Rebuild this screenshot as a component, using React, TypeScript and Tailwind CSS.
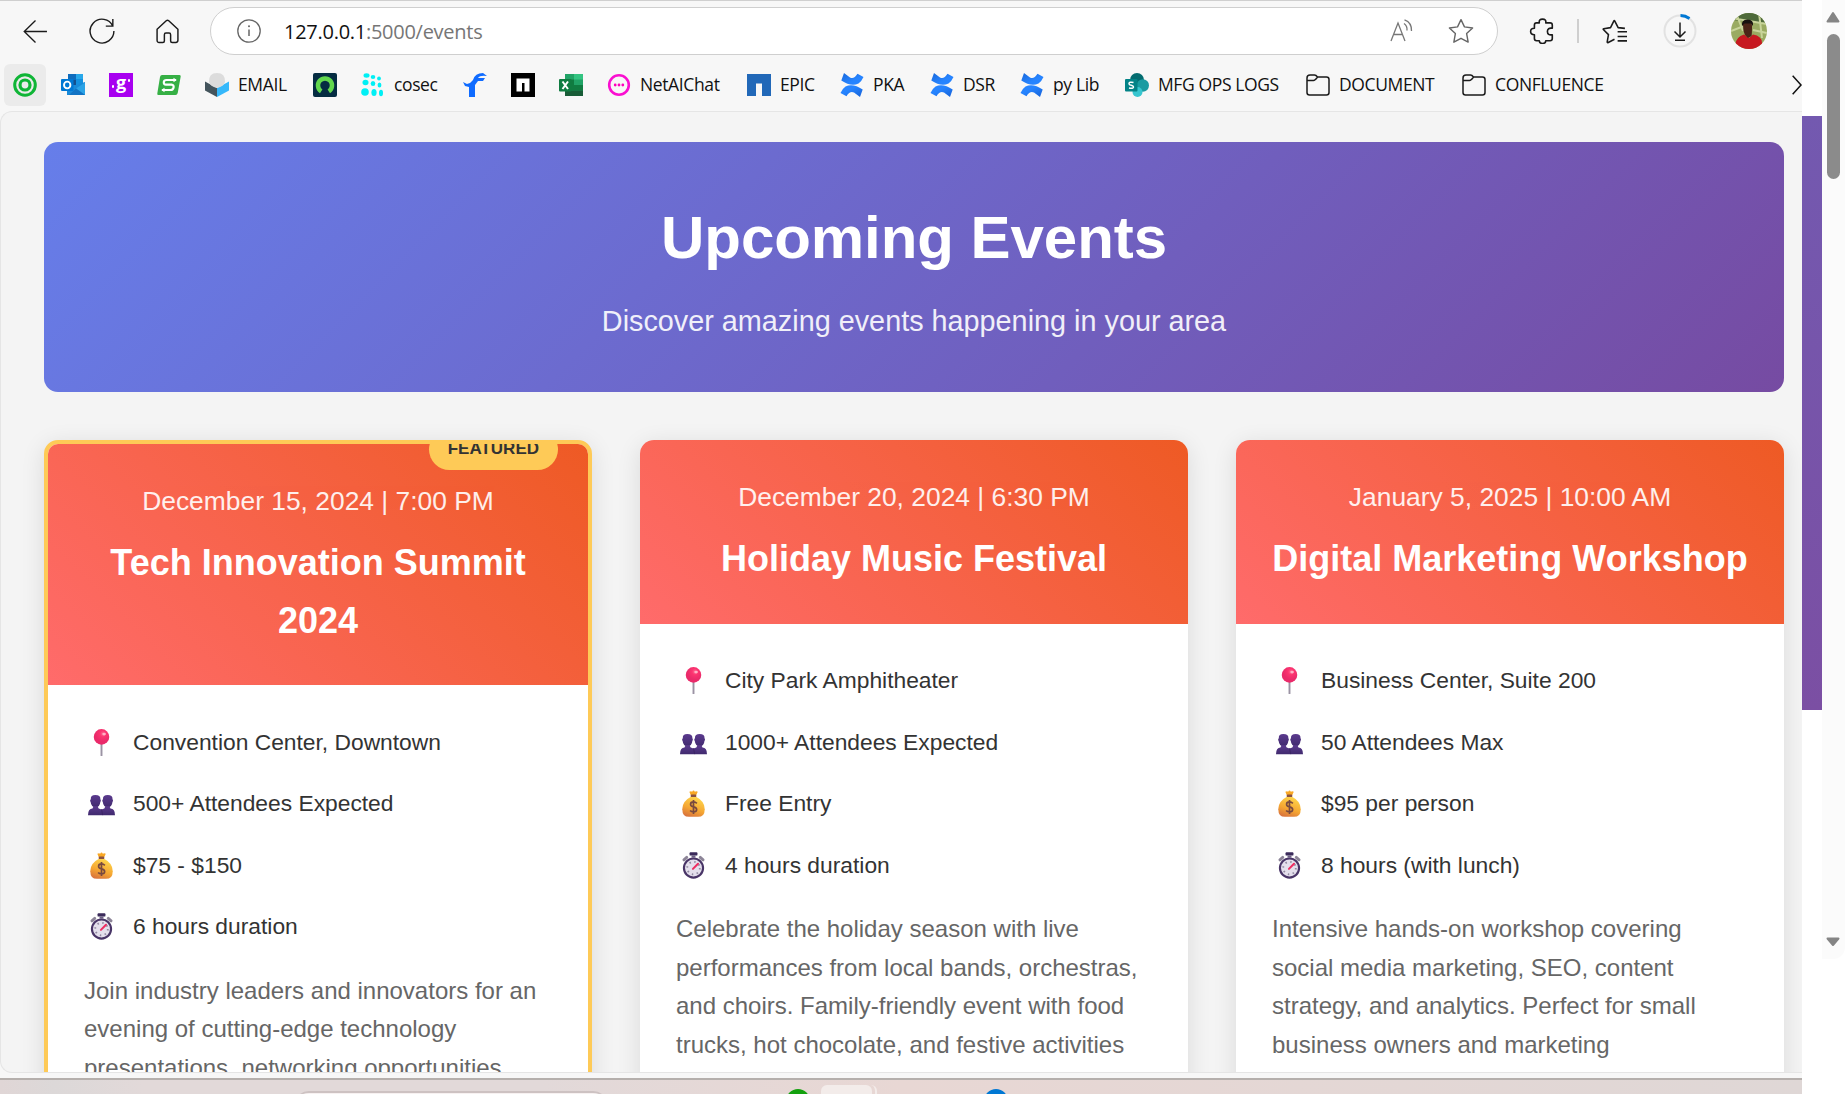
import React from 'react';

const Svg = ({ s = 24, vb = '0 0 24 24', c = '', children }: { s?: number; vb?: string; c?: string; children: React.ReactNode }) => (
  <svg width={s} height={s} viewBox={vb} className={'shrink-0 ' + c} fill="none">{children}</svg>
);

const Confluence = () => (
  <Svg>
    <defs>
      <linearGradient id="cf" x1="0" y1="0" x2="1" y2="1"><stop offset="0" stopColor="#1868db" /><stop offset=".6" stopColor="#2684ff" /></linearGradient>
      <linearGradient id="cg" x1="1" y1="1" x2="0" y2="0"><stop offset="0" stopColor="#1560d6" /><stop offset=".6" stopColor="#2684ff" /></linearGradient>
    </defs>
    <path d="M4 0 L1.300 7.500 Q11 14 18.500 10.500 Q21.500 8.500 23.500 4 L17.500 .8 Q14 6.500 10 4.500Z" fill="url(#cf)" />
    <path d="M20 24 L22.700 16.500 Q13 10 5.500 13.500 Q2.500 15.500 .500 20 L6.500 23.200 Q10 17.500 14 19.500Z" fill="url(#cg)" />
  </Svg>
);

const Folder = () => (
  <Svg><path d="M1 5 Q1 2 4 2 H8.500 Q10 2 11.500 4 H20.500 Q23 4 23 6.500 V19.500 Q23 22 20.500 22 H3.500 Q1 22 1 19.500Z M1 7.500 H7.500 Q9 7.500 11.500 4" stroke="#1b1b1b" strokeWidth="1.500" strokeLinejoin="round" /></Svg>
);

const icons: Record<string, React.ReactNode> = {
  target: <Svg><circle cx="12" cy="12" r="10.300" stroke="#0fb536" strokeWidth="3" /><circle cx="12" cy="12" r="5" stroke="#0fb536" strokeWidth="3.200" /></Svg>,
  outlook: <Svg><path d="M7 1H22V12H7Z" fill="#1490df" /><path d="M7 1H15V7H7Z" fill="#0f6cbd" /><path d="M15 1H22V6H15Z" fill="#28a8ea" /><path d="M7 7H15V12H7Z" fill="#14508f" /><path d="M6 12 H15 L24 9 V22 H6Z" fill="#1a8ad8" /><path d="M15 15.500 L24 9.500 V22Z" fill="#2ba3e6" /><path d="M15 15.500 L24 22 H8Z" fill="#1273c4" /><rect x="0" y="6" width="12.500" height="12" rx="1" fill="#0078d4" /><ellipse cx="6.200" cy="12" rx="3.200" ry="3.400" stroke="#fff" strokeWidth="1.900" /></Svg>,
  g: (
    <span className="flex size-6 items-center justify-center gap-[2px] bg-[#a800f0] leading-none text-white">
      <span className="mt-[3px] size-[2.500px] rounded-full bg-white" />
      <span className="-mt-[7px] font-['Open_Sans'] text-[18px] font-bold leading-none">g</span>
      <span className="-mt-[9px] size-[2.500px] rounded-full bg-white" />
    </span>
  ),
  s: <Svg><path d="M5 2 H22.500 Q24 2 23.700 3.500 L20.700 20 Q20.300 22 18.500 22 H1.500 Q0 22 .300 20.500 L3 4 Q3.400 2 5 2Z" fill="#36b045" /><path d="M19 7 H9.500 Q7 7 6.800 9.200 Q6.600 11.500 9 11.700 H14.500 Q17 12 16.600 14.300 Q16.200 17 13.500 17 H5" stroke="#fff" strokeWidth="2.200" /><path d="M16.500 4.800V9.200L19.800 7ZM7.500 14.800V19.200L4.200 17Z" fill="#fff" /></Svg>,
  email: <Svg><path d="M0 8.500 L12 15 V24 L0 17.500Z" fill="#44545c" /><path d="M12 15 L24 8.500 V17.500 L12 24Z" fill="#35b8fb" /><path d="M4 9 Q3.500 0 12 0 Q20.500 0 20 9 Q19 13.500 12 15 Q5 13.500 4 9Z" fill="#dcdcdc" /></Svg>,
  green: <Svg><rect width="24" height="24" rx="2" fill="#052c42" /><path d="M8.200 18.300 A7 7 0 1 1 15.800 18.300" stroke="#62d84e" strokeWidth="4.500" /></Svg>,
  cosec: <Svg><g fill="#00f0f5"><ellipse cx="5.500" cy="2.500" rx="3" ry="2.200" /><ellipse cx="12" cy="4" rx="2.300" ry="2" /><ellipse cx="18" cy="5.500" rx="1.900" ry="1.900" /><ellipse cx="4.500" cy="9.500" rx="3" ry="2.800" /><ellipse cx="12" cy="10.500" rx="2.300" ry="2.500" /><ellipse cx="18.500" cy="12" rx="1.900" ry="2.500" /><circle cx="4" cy="19" r="3.800" /><ellipse cx="13" cy="19.500" rx="2.600" ry="3.500" /><ellipse cx="20" cy="20" rx="2" ry="3.300" /></g></Svg>,
  f: <Svg><path d="M0 9 L4 11 Q8 10 10 7 Q12 0 20 0 L24 3 Q17 2 15 5 L22 5 L20 8 H15 L12 12 V24 H6 V14 L2 13Z" fill="#0f6bff" /></Svg>,
  n: <Svg><path d="M0 0H24V24H0Z" fill="#000" /><path d="M5.500 5.500H18.500V18.500H13.500V10H11V18.500H5.500Z" fill="#fff" /></Svg>,
  excel: <Svg><path d="M6 1H24V23H6Z" fill="#21a366" /><path d="M15 1H24V6.500H15Z" fill="#33c481" /><path d="M6 6.500H15V12H6Z" fill="#107c41" /><path d="M6 12H24V17.500H6Z" fill="#107c41" /><path d="M6 17.500H24V23H6Z" fill="#185c37" /><rect y="6" width="12.500" height="12.500" rx="1" fill="#107c41" /><path d="M3.500 8.500 L9 16 M9 8.500 L3.500 16" stroke="#fff" strokeWidth="2" /></Svg>,
  chat: <Svg><circle cx="12" cy="12" r="9.800" stroke="#fa0fd0" strokeWidth="2.600" /><g fill="#f0b"><circle cx="8.200" cy="12" r="1.400" /><circle cx="12" cy="12" r="1.400" /><circle cx="15.800" cy="12" r="1.400" /></g></Svg>,
  epic: <Svg><path d="M0 1H24V23H15V10.500H9V23H0Z" fill="#2168b8" /></Svg>,
  conf: <Confluence />,
  share: <Svg><circle cx="12" cy="7" r="7" fill="#036c70" /><circle cx="17.800" cy="12.500" r="6.200" fill="#1a9ba1" /><circle cx="12.500" cy="19" r="5" fill="#37c6d0" /><rect y="6" width="12.500" height="12.500" rx="1" fill="#038387" /><path d="M8.500 9.500 Q4 8.500 4 10.700 Q4 12 6.200 12.300 Q8.500 13 8.500 14 Q8.300 16 4 15" stroke="#fff" strokeWidth="1.500" /></Svg>,
  folder: <Folder />,
};

const bookmarks: { i: string; t?: string; w: string }[] = [
  { i: 'target', w: 'w-[48px]' }, { i: 'outlook', w: 'w-[48px]' }, { i: 'g', w: 'w-[48px]' }, { i: 's', w: 'w-[48px]' },
  { i: 'email', t: 'EMAIL', w: 'w-[108px]' }, { i: 'green', w: 'w-[48px]' }, { i: 'cosec', t: 'cosec', w: 'w-[102px]' },
  { i: 'f', w: 'w-[48px]' }, { i: 'n', w: 'w-[48px]' }, { i: 'excel', w: 'w-[48px]' }, { i: 'chat', t: 'NetAIChat', w: 'w-[140px]' },
  { i: 'epic', t: 'EPIC', w: 'w-[93px]' }, { i: 'conf', t: 'PKA', w: 'w-[90px]' }, { i: 'conf', t: 'DSR', w: 'w-[90px]' },
  { i: 'conf', t: 'py Lib', w: 'w-[105px]' }, { i: 'share', t: 'MFG OPS LOGS', w: 'w-[181px]' },
  { i: 'folder', t: 'DOCUMENT', w: 'w-[156px]' }, { i: 'folder', t: 'CONFLUENCE', w: 'w-[170px]' },
];

const Pin = () => (
  <Svg s={27}><defs><radialGradient id="pin" cx=".6" cy=".3"><stop offset="0" stopColor="#ff6a94" /><stop offset=".4" stopColor="#fb3470" /><stop offset="1" stopColor="#ea2a6a" /></radialGradient></defs>
    <path d="M12 12V23.500" stroke="#9b93a4" strokeWidth="1.700" strokeLinecap="round" /><circle cx="12" cy="7" r="6.900" fill="url(#pin)" /><ellipse cx="14.300" cy="4.500" rx="1.600" ry="1.200" fill="#ffb0c5" /></Svg>
);
const People = () => (
  <Svg s={27} c="translate-y-[1px]"><defs><linearGradient id="ppl" x1="0" y1="0" x2="0" y2="1"><stop offset="0" stopColor="#5b3a8e" /><stop offset="1" stopColor="#402a6e" /></linearGradient></defs>
    <g fill="url(#ppl)"><path d="M2.500 7 Q2.200 3.500 6.500 3.500 Q11.200 3.500 11 7 Q12 8.500 10.900 10 Q10.500 14.500 6.700 14.700 Q2.900 14.500 2.400 10 Q1.200 8.500 2.500 7Z" /><path d="M13.300 7 Q13.100 3.500 17.500 3.500 Q22 3.500 21.800 7 Q22.800 8.500 21.700 10 Q21.300 14.500 17.500 14.700 Q13.700 14.500 13.200 10 Q12 8.500 13.300 7Z" /><path d="M0 21.500 Q0 15.500 4 15.500 L5 13.500 H8.500 L9.500 15.500 L12 16.500 L14.500 15.500 L15.500 13.500 H19 L20 15.500 Q24 15.500 24 21.500Z" /></g><path d="M12 16 L13 21.500" stroke="#35205c" strokeWidth=".6" /></Svg>
);
const Bag = () => (
  <Svg s={27}><defs><linearGradient id="bag" x1=".7" y1="0" x2=".3" y2="1"><stop offset="0" stopColor="#ffd84d" /><stop offset=".6" stopColor="#f5a632" /><stop offset="1" stopColor="#d9743d" /></linearGradient></defs>
    <path d="M9.500 4.500 L8.300 1.500 Q10 .5 10.800 1.500 Q12 -.8 13.200 1.500 Q14.500 .5 15.800 1.500 L14.500 4.500Z" fill="#f9a825" /><path d="M9.700 6 Q2 10 2 17 Q2 23.800 8 23.800 H16 Q22 23.800 22 17 Q22 10 14.300 6Z" fill="url(#bag)" /><rect x="9.500" y="4" width="5" height="2.300" rx=".8" fill="#8a5140" /><path d="M15 11.800 Q13.500 10.500 12 10.600 Q9.400 10.700 9.400 12.700 Q9.400 14.600 12 15 Q14.800 15.500 14.800 17.500 Q14.700 19.500 12 19.500 Q10 19.500 9 18.200 M12 8.800V21.300" stroke="#78493f" strokeWidth="1.500" /></Svg>
);
const Watch = () => (
  <Svg s={27}><path d="M3.500 7 L6 4.800 M20.500 7 L18 4.800" stroke="#8c8497" strokeWidth="2.600" strokeLinecap="round" /><rect x="8.500" y=".2" width="7" height="3" rx=".8" fill="#3b2b5b" /><path d="M12 3V5" stroke="#6e6285" strokeWidth="3.500" /><circle cx="12" cy="14.300" r="8.500" fill="#e4dfec" stroke="#493567" strokeWidth="1.900" /><circle cx="12" cy="14.300" r="5.600" stroke="#9189a0" strokeWidth="1.600" strokeDasharray="1.300 3.098" /><path d="M11.500 15 L16 10.500" stroke="#ee2d61" strokeWidth="1.800" strokeLinecap="round" /></Svg>
);
const detailIcons = [Pin, People, Bag, Watch];

type Event = { date: string; title: string; details: string[]; lines: string[]; featured?: boolean };
const events: Event[] = [
  { featured: true, date: 'December 15, 2024 | 7:00 PM', title: 'Tech Innovation Summit 2024', details: ['Convention Center, Downtown', '500+ Attendees Expected', '$75 - $150', '6 hours duration'], lines: ['Join industry leaders and innovators for an', 'evening of cutting-edge technology', 'presentations, networking opportunities,'] },
  { date: 'December 20, 2024 | 6:30 PM', title: 'Holiday Music Festival', details: ['City Park Amphitheater', '1000+ Attendees Expected', 'Free Entry', '4 hours duration'], lines: ['Celebrate the holiday season with live', 'performances from local bands, orchestras,', 'and choirs. Family-friendly event with food', 'trucks, hot chocolate, and festive activities'] },
  { date: 'January 5, 2025 | 10:00 AM', title: 'Digital Marketing Workshop', details: ['Business Center, Suite 200', '50 Attendees Max', '$95 per person', '8 hours (with lunch)'], lines: ['Intensive hands-on workshop covering', 'social media marketing, SEO, content', 'strategy, and analytics. Perfect for small', 'business owners and marketing'] },
];

function Card({ e }: { e: Event }) {
  return (
    <article className={'relative h-[760px] w-[548px] shrink-0 overflow-hidden rounded-[14px] bg-white shadow-[0_5px_24px_rgba(0,0,0,0.11)] ' + (e.featured ? 'border-4 border-[#feca57]' : '')}>
      {e.featured && <span className="absolute right-[30px] top-[-15px] rounded-[24px] bg-[#feca57] px-[19px] pb-[7px] pt-[6px] text-[17px] font-bold leading-[28px] text-[#333]">FEATURED</span>}
      <header className="bg-[linear-gradient(45deg,#ff6b6b,#ee5a24)] p-9 text-center text-white">
        <p className="mb-3 text-[26.4px] leading-[42.24px] opacity-90">{e.date}</p>
        <h2 className="text-[36px] font-bold leading-[57.6px]">{e.title}</h2>
      </header>
      <div className="p-9">
        <ul className="mb-6 flex flex-col gap-[19.2px]">
          {e.details.map((d, n) => {
            const Icon = detailIcons[n];
            return (
              <li key={d} className="flex h-[42.24px] items-center text-[22.8px] text-[#333]">
                <span className="mr-[14px] flex w-[35px] justify-center"><Icon /></span><span className="-mt-px">{d}</span>
              </li>
            );
          })}
        </ul>
        <p className="whitespace-nowrap text-[24px] leading-[38.4px] text-[#666]">{e.lines.map(l => <span key={l} className="block">{l}</span>)}</p>
      </div>
    </article>
  );
}

function Toolbar() {
  return (
    <div className="flex h-[61px] items-center border-t border-[#cfcfcf] text-[#1b1b1b]">
      <Svg c="ml-[24px]" s={25}><path d="M23 12H1.500M12 1.500L1.200 12L12 22.500" stroke="currentColor" strokeWidth="1.300" /></Svg>
      <Svg c="ml-[41px]" s={26}><path d="M22 7.500 A11 11 0 1 0 23 12 M22 1V7.500H15.500" stroke="currentColor" strokeWidth="1.300" /></Svg>
      <Svg c="ml-[40px]" s={25}><path d="M2 9.800 L10.800 1.700 Q12 .700 13.200 1.700 L22 9.800 V20.500 Q22 22.500 20 22.500 H16.500 Q15 22.500 15 21 V15 Q15 13.500 13.500 13.500 H10.500 Q9 13.500 9 15 V21 Q9 22.500 7.500 22.500 H4 Q2 22.500 2 20.500Z" stroke="currentColor" strokeWidth="1.400" strokeLinejoin="round" /></Svg>
      <div className="ml-[30px] flex h-[48px] w-[1288px] items-center rounded-full border border-[#cfcfcf] bg-white">
        <Svg c="ml-[26px] text-[#666]"><circle cx="12" cy="12" r="11.200" stroke="currentColor" strokeWidth="1.300" /><path d="M12 10.500V17" stroke="currentColor" strokeWidth="1.500" /><circle cx="12" cy="7.300" r="1" fill="currentColor" /></Svg>
        <span className="ml-[23px] mt-[2px] flex-1 font-['Open_Sans'] text-[20px] tracking-[-0.270px] text-[#111]">127.0.0.1<span className="text-[#767676]">:5000/events</span></span>
        <Svg c="mr-[34px] text-[#777]"><path d="M1 22L8 4L15 22M3.500 15.500H12.500M14 4.500Q17.500 7 17 11.500M14.500 .800Q22 3.500 21.500 12" stroke="currentColor" strokeWidth="1.300" /></Svg>
        <Svg c="mr-[23px] text-[#666]" s={26}><path d="M12 1.500L15.200 8.200L22.700 9.200L17.200 14.400L18.600 22.300L12 18.700L5.400 22.300L6.800 14.400L1.300 9.200L8.800 8.200Z" stroke="currentColor" strokeWidth="1.300" strokeLinejoin="round" /></Svg>
      </div>
      <Svg c="ml-[31px]" s={26}><path d="M7 4.500H9.500Q9 1 12.500 1Q16 1 15.500 4.500H19.500Q21.500 4.500 21.500 6.500V9.500Q17 8.800 17 12.500Q17 16.200 21.500 15.500V19Q21.500 21 19.500 21H15.500Q15.500 23.500 12.500 23.500Q9.500 23.500 9.500 21H7Q5 21 5 19V15.500Q1.500 15.500 1.500 12.500Q1.500 9.500 5 9.500V6.500Q5 4.500 7 4.500Z" stroke="currentColor" strokeWidth="1.500" strokeLinejoin="round" /></Svg>
      <span className="ml-[22px] h-6 w-[1.500px] bg-[#cfcfcf]" />
      <Svg c="ml-[23px]" s={25}><path d="M22 9L15.500 8.300L12.300 2Q11.800 1 11.300 2L8.200 8.300L1.700 9.300Q.700 9.500 1.500 10.300L6.200 15L5 22Q5 23 6 22.500L12 19.500M15 12.300H24M15 16.800H24M15 21H24" stroke="currentColor" strokeWidth="1.500" strokeLinejoin="round" /></Svg>
      <Svg c="ml-[36px]" s={34} vb="0 0 34 34"><circle cx="17" cy="17" r="15.500" stroke="#e2e2e2" strokeWidth="2" /><path d="M17.500 1.500A15.500 15.500 0 0 1 26.500 4.500" stroke="#0078d4" strokeWidth="2.800" /><path d="M17 8.500V22.500M11.500 17.500L17 23L22.500 17.500M12 26.300H22" stroke="currentColor" strokeWidth="1.500" /></Svg>
      <svg width="36" height="36" viewBox="0 0 36 36" className="ml-[34px] shrink-0 rounded-full"><rect width="36" height="36" fill="#9aab62" /><path d="M0 0H36V10L0 7Z" fill="#4e6a3a" /><path d="M0 5L36 11M5 0L12 18M28 0L31 25M0 18L13 13M22 17L36 20" stroke="#c8d49a" strokeWidth="2" /><path d="M4 32Q5 24 13 21.500L18 25L22 21.500Q31 23 31 30V36H4Z" fill="#c71920" /><path d="M12 12Q12 7 16.500 7Q21 7 21 13Q21 21 20.500 23L17 25L14 22Q12 18 12 12Z" fill="#4c2518" /><path d="M11 13Q10 6.500 16.500 6.500Q23 6.500 22 13L20 10.500H13.500Z" fill="#17120f" /></svg>
    </div>
  );
}

export default function App() {
  return (
    <div className="flex h-[1094px] w-[1845px] overflow-hidden bg-white font-['Liberation_Sans',sans-serif]">
      <div className="flex w-[1802px] shrink-0 flex-col bg-[#f7f7f7]">
        <div className="-ml-px flex flex-col"><Toolbar /></div>
        <div className="flex h-[50px] items-center pb-[2px] font-['Open_Sans'] text-[17.500px] tracking-[-0.380px] text-[#111]">
          <div className="flex flex-1 items-center pl-[4px]">
            {bookmarks.map((b, n) => (
              <div key={n} className={'flex h-[42px] shrink-0 items-center ' + b.w}>
                <span className={n === 0 ? 'flex h-[42px] w-[42px] items-center justify-center rounded-md bg-[#ebebeb]' : 'ml-[9px] flex'}>{icons[b.i]}</span>
                {b.t && <span className="-mt-px ml-[9px] whitespace-nowrap">{b.t}</span>}
              </div>
            ))}
          </div>
          <Svg s={20} c="-mr-[4px] text-[#111]"><path d="M8 1L18 12L8 23" stroke="currentColor" strokeWidth="1.800" /></Svg>
        </div>
        <main className="h-[962px] shrink-0 overflow-hidden rounded-l-[12px] border-y border-l border-[#e5e5e5] bg-[#f4f4f4] pl-[43px] pt-[30px]">
          <section className="flex h-[250px] w-[1740px] flex-col items-center rounded-[14px] bg-[linear-gradient(135deg,#667eea,#764ba2)] pt-12 text-white">
            <h1 className="mb-3 text-[60px] font-bold leading-[96px] tracking-[-0.050px]">Upcoming Events</h1>
            <p className="text-[28.8px] leading-[46px] opacity-90">Discover amazing events happening in your area</p>
          </section>
          <div className="mt-12 flex gap-12">
            {events.map(e => <Card key={e.title} e={e} />)}
          </div>
        </main>
        <div className="h-[5px] shrink-0 bg-[#f7f7f7]" />
        <div className="flex h-[16px] shrink-0 overflow-hidden border-t-2 border-[#b5afac] bg-[linear-gradient(90deg,#e0d6d6,#dcd8d8_3%,#e2d9d9_8%,#e2d9d9_30%,#e8d7d4_50%,#dfd7d6)]">
          <div className="ml-[294px] mt-[11px] h-[30px] w-[314px] rounded-[20px] border-t-2 border-[#cdc2c2] bg-[#f7f1f1]" />
          <div className="ml-[178px] mt-[9px] size-6 rounded-full bg-[#13a10e]" />
          <div className="ml-[11px] mt-[5px] h-[30px] w-[56px] rounded-md border-r-2 border-[#f3ecea] pr-[3px]"><div className="h-full rounded-md bg-[#f3ecea]" /></div>
          <div className="ml-[107px] mt-[9px] size-6 rounded-full bg-[#0078d4]" />
        </div>
      </div>
      <div className="flex w-5 shrink-0 flex-col pt-[116px]"><div className="h-[594px] bg-[linear-gradient(170deg,#7359b0,#7b4fa3)]" /></div>
      <div className="flex h-[959px] flex-1 flex-col items-center rounded-br-[12px] bg-[#fbfbfb] pt-[10px]">
        <Svg s={16} vb="0 0 16 16" c="-ml-px"><path d="M2.500 11.500L8 3L13.500 11.500Z" fill="#858585" stroke="#858585" strokeWidth="2" strokeLinejoin="round" /></Svg>
        <div className="-ml-px mt-[8px] h-[145px] w-[13px] rounded-full bg-[#8b8b8b]" />
        <Svg s={16} vb="0 0 16 16" c="-ml-px mb-[9px] mt-auto"><path d="M2.500 4.500L8 11L13.500 4.500Z" fill="#858585" stroke="#858585" strokeWidth="2" strokeLinejoin="round" /></Svg>
      </div>
    </div>
  );
}
